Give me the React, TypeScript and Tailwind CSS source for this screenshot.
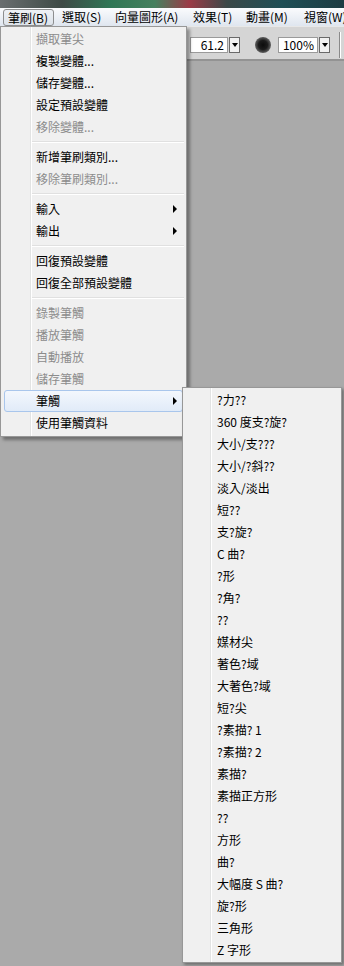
import React from "react";

type Item = { t: string; d?: boolean; sub?: boolean; hl?: boolean } | "sep";

const mainItems: Item[] = [
  { t: "擷取筆尖", d: true },
  { t: "複製變體..." },
  { t: "儲存變體..." },
  { t: "設定預設變體" },
  { t: "移除變體...", d: true },
  "sep",
  { t: "新增筆刷類別..." },
  { t: "移除筆刷類別...", d: true },
  "sep",
  { t: "輸入", sub: true },
  { t: "輸出", sub: true },
  "sep",
  { t: "回復預設變體" },
  { t: "回復全部預設變體" },
  "sep",
  { t: "錄製筆觸", d: true },
  { t: "播放筆觸", d: true },
  { t: "自動播放", d: true },
  { t: "儲存筆觸", d: true },
  { t: "筆觸", sub: true, hl: true },
  { t: "使用筆觸資料" },
];

const subItems: string[] = [
  "?力??",
  "360 度支?旋?",
  "大小/支???",
  "大小/?斜??",
  "淡入/淡出",
  "短??",
  "支?旋?",
  "C 曲?",
  "?形",
  "?角?",
  "??",
  "媒材尖",
  "著色?域",
  "大著色?域",
  "短?尖",
  "?素描? 1",
  "?素描? 2",
  "素描?",
  "素描正方形",
  "??",
  "方形",
  "曲?",
  "大幅度 S 曲?",
  "旋?形",
  "三角形",
  "Z 字形",
];

function Arrow() {
  return <div className="w-0 h-0 border-y-[4px] border-y-transparent border-l-[4px] border-l-black" />;
}

function DropBtn() {
  return (
    <div className="ml-[1px] w-[11px] h-[16px] border border-[#6a6a6a] bg-[#f1f1f1] flex items-center justify-center">
      <div className="w-0 h-0 border-x-[3px] border-x-transparent border-t-[4px] border-t-black" />
    </div>
  );
}

function MenuItem({ item, pl }: { item: Exclude<Item, "sep">; pl: string }) {
  return (
    <div
      className={
        "mx-[3px] h-[22px] flex items-center justify-between pr-[5px] rounded-[3px] border " +
        (item.hl
          ? "border-[#a9c6ec] bg-gradient-to-b from-[#f3f7fd] to-[#e1ebf8]"
          : "border-transparent")
      }
    >
      <span className={pl + " text-[12px] leading-none " + (item.d ? "text-[#8c8c8c]" : "text-black")}>
        {item.t}
      </span>
      {item.sub ? <Arrow /> : null}
    </div>
  );
}

function Sep() {
  return (
    <div className="h-[8px] flex flex-col justify-center pl-[31px] pr-[2px]">
      <div className="h-[1px] bg-[#e0e0e0]" />
      <div className="h-[1px] bg-white" />
    </div>
  );
}

export default function App() {
  const menuBar = [
    { t: "筆刷(B)", w: "w-[54px]", sel: true },
    { t: "選取(S)", w: "w-[53px]" },
    { t: "向量圖形(A)", w: "w-[78px]" },
    { t: "效果(T)", w: "w-[53px]" },
    { t: "動畫(M)", w: "w-[58px]" },
    { t: "視窗(W)", w: "w-[60px]" },
  ];

  return (
    <div className="relative w-[344px] h-[966px] overflow-hidden bg-[#aaaaaa] font-['Noto_Sans_CJK_TC','Noto_Sans',sans-serif] flex flex-col">
      {/* top window strip */}
      <div className="h-[8px] shrink-0 bg-[linear-gradient(90deg,#6a6e70_0%,#3e4a46_18%,#2f7656_32%,#45805e_45%,#9b3a47_55%,#3b4848_66%,#1f4f56_82%,#1d3b42_100%)]" />

      {/* menu bar */}
      <div className="h-[18px] shrink-0 flex items-stretch bg-gradient-to-b from-[#fafbfd] to-[#dfe6ef] whitespace-nowrap overflow-hidden">
        <div className="w-[3px] shrink-0" />
        {menuBar.map((m) => (
          <div key={m.t} className={m.w + " shrink-0 flex items-center"}>
            {m.sel ? (
              <div className="w-[51px] h-[17px] mt-[1px] flex items-center pl-[4px] rounded-[3px] border border-[#8d8e8f] bg-gradient-to-b from-[#eef1f5] to-[#dde3ea]">
                <span className="text-[12px] leading-none text-black">{m.t}</span>
              </div>
            ) : (
              <span className="pl-[5px] text-[12px] leading-none text-black">{m.t}</span>
            )}
          </div>
        ))}
      </div>

      {/* toolbar */}
      <div className="h-[33px] shrink-0 bg-[#d5d5d5] border-t border-t-[#e8e8e8] flex items-center pl-[190px] pt-[4px]">
        <div className="w-[38px] h-[16px] bg-white border border-[#9a9a9a] flex items-center justify-end pr-[3px]">
          <span className="text-[12px] leading-none text-black">61.2</span>
        </div>
        <DropBtn />
        <div className="ml-[15px] w-[16px] h-[16px] rounded-full bg-[radial-gradient(circle,#0c0c0c_0%,#1c1c1c_40%,#6a6a6a_75%,#d5d5d5_100%)]" />
        <div className="ml-[7px] w-[40px] h-[16px] bg-white border border-[#9a9a9a] flex items-center justify-end pr-[3px]">
          <span className="text-[12px] leading-none text-black">100%</span>
        </div>
        <DropBtn />
        <div className="ml-[9px] h-[26px] w-[2px] border-l border-l-[#8a8a8a] border-r border-r-white" />
      </div>
      <div className="h-[2px] shrink-0 bg-[#939393]" />

      {/* canvas */}
      <div className="flex-1 bg-[#aaaaaa]" />

      {/* main dropdown menu */}
      <div className="absolute left-0 top-[26px] w-[187px] border border-[#979797] bg-[#f0f0f0] pt-[1px] pb-[2px] shadow-[3px_3px_3px_rgba(0,0,0,0.35)]">
        <div className="absolute left-[29px] top-0 bottom-0 w-[2px] border-l border-l-[#e2e3e3] border-r border-r-white" />
        <div className="relative">
          {mainItems.map((it, i) =>
            it === "sep" ? <Sep key={i} /> : <MenuItem key={i} item={it} pl="pl-[31px]" />
          )}
        </div>
      </div>

      {/* submenu */}
      <div className="absolute left-[182px] top-[387px] w-[160px] border border-[#979797] bg-[#f0f0f0] pt-[1px] pb-[1px] shadow-[2px_2px_3px_rgba(0,0,0,0.35)]">
        <div className="absolute left-[27px] top-0 bottom-0 w-[2px] border-l border-l-[#e2e3e3] border-r border-r-white" />
        <div className="relative">
          {subItems.map((s, i) => (
            <MenuItem key={i} item={{ t: s }} pl="pl-[30px]" />
          ))}
        </div>
      </div>
    </div>
  );
}
